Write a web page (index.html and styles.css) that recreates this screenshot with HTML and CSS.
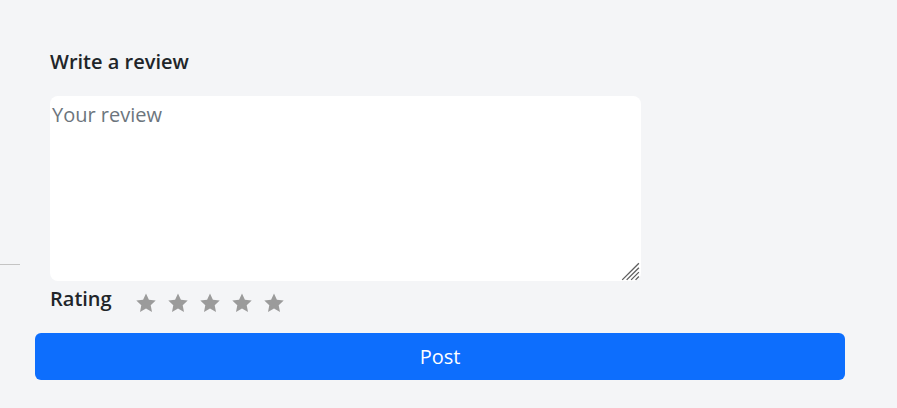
FILE: index.html
```html
<!DOCTYPE html>
<html>
<head>
<meta charset="utf-8">
<link rel="stylesheet" href="styles.css">
</head>
<body>
<div class="page">
  <h2 class="title">Write a review</h2>
  <div class="row">
    <div class="rule"></div>
    <div class="field">
      <textarea class="review" placeholder="Your review"></textarea>
      <svg class="grip" viewBox="0 0 18 18"><path d="M17 2L2 17M17 6L6 17M17 10L10 17M17 14L14 17" stroke="#5f5f5f" stroke-width="1.2" fill="none"/></svg>
    </div>
  </div>
  <div class="rating">
    <span class="label">Rating</span>
    <div class="stars">
      <svg class="star" viewBox="0 0 24 24"><path d="M12 2.5l2.9 6.2 6.8.8-5 4.7 1.3 6.7L12 17.6l-6 3.3 1.3-6.7-5-4.7 6.8-.8z"/></svg>
      <svg class="star" viewBox="0 0 24 24"><path d="M12 2.5l2.9 6.2 6.8.8-5 4.7 1.3 6.7L12 17.6l-6 3.3 1.3-6.7-5-4.7 6.8-.8z"/></svg>
      <svg class="star" viewBox="0 0 24 24"><path d="M12 2.5l2.9 6.2 6.8.8-5 4.7 1.3 6.7L12 17.6l-6 3.3 1.3-6.7-5-4.7 6.8-.8z"/></svg>
      <svg class="star" viewBox="0 0 24 24"><path d="M12 2.5l2.9 6.2 6.8.8-5 4.7 1.3 6.7L12 17.6l-6 3.3 1.3-6.7-5-4.7 6.8-.8z"/></svg>
      <svg class="star" viewBox="0 0 24 24"><path d="M12 2.5l2.9 6.2 6.8.8-5 4.7 1.3 6.7L12 17.6l-6 3.3 1.3-6.7-5-4.7 6.8-.8z"/></svg>
    </div>
  </div>
  <button class="post">Post</button>
</div>
</body>
</html>
```
FILE: styles.css
```css
html, body {
  margin: 0;
  padding: 0;
  background: #f4f5f7;
  font-family: "Open Sans", "Noto Sans", sans-serif;
  color: #212529;
}
.page {
  padding-top: 48px;
  height: 408px;
  box-sizing: border-box;
}
.title {
  margin: 0 0 20px 50px;
  font-size: 20px;
  font-weight: 600;
  line-height: 28px;
}
.row {
  display: flex;
  align-items: flex-start;
}
.rule {
  width: 20px;
  height: 1px;
  background: #c4c4c4;
  margin-top: 168px;
  margin-right: 30px;
}
.field {
  position: relative;
  width: 591px;
  height: 185px;
}
.review {
  display: block;
  width: 591px;
  height: 185px;
  box-sizing: border-box;
  border: none;
  border-radius: 8px;
  background: #fff;
  padding: 5px 2px;
  font-family: "Open Sans", "Noto Sans", sans-serif;
  font-size: 20px;
  line-height: 28px;
  outline: none;
  resize: none;
  margin: 0;
}
.review::placeholder {
  color: #6c757d;
}
.grip {
  position: absolute;
  right: 1px;
  bottom: 0;
  width: 20px;
  height: 20px;
}
.rating {
  display: flex;
  align-items: center;
  margin-left: 50px;
  margin-top: 2px;
  height: 36px;
}
.label {
  font-size: 20px;
  font-weight: 600;
  line-height: 28px;
  margin-top: -4px;
}
.stars {
  display: flex;
  gap: 8px;
  margin-left: 22px;
  margin-top: 4px;
}
.star {
  width: 24px;
  height: 24px;
  fill: #9b9b9b;
}
.post {
  display: block;
  margin: 14px 0 0 35px;
  width: 810px;
  height: 47px;
  border: none;
  border-radius: 6px;
  background: #0d6efd;
  color: #fff;
  font-family: "Open Sans", "Noto Sans", sans-serif;
  font-size: 20px;
}
```
